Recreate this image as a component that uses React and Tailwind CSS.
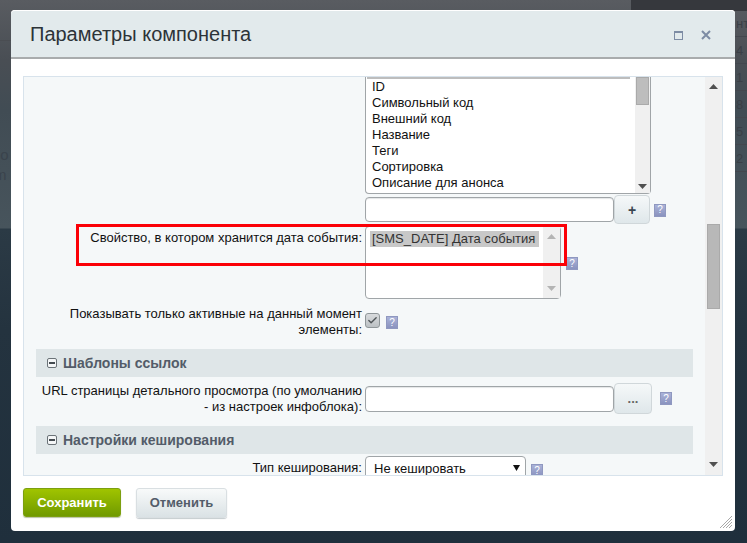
import { Check } from "lucide-react";

const fieldsList = ["ID", "Символьный код", "Внешний код", "Название", "Теги", "Сортировка", "Описание для анонса"];
const backdropCells = ["нт", "4", "1", "8", "5", "2"];

function Help({ className = "" }) {
	return (
		<span className={"flex h-[13px] w-[12px] shrink-0 items-center justify-center border border-[#8f98c0] bg-[linear-gradient(#aab2d8,#8a93bf)] text-[10px] leading-none text-white " + className}>?</span>
	);
}

function Arrow({ up, dim }) {
	const color = dim ? "#b4b4b4" : "#505050";
	return (
		<svg width="9" height="5" viewBox="0 0 9 5" className="block">
			<path d={up ? "M4.5 0L9 5H0Z" : "M0 0H9L4.5 5Z"} fill={color} />
		</svg>
	);
}

function SectionHead({ title, className = "" }) {
	return (
		<div className={"flex h-[28px] w-[657px] items-center bg-[#dfe6e8] pl-[11px] " + className}>
			<span className="relative mr-[6px] h-[10px] w-[10px] rounded-[2px] border border-[#6b7378] bg-[#f4f6f7]">
				<span className="absolute left-[1px] top-[3px] h-[2px] w-[6px] bg-[#444b50]" />
			</span>
			<span className="text-[14px] font-bold leading-none text-[#535c69]">{title}</span>
		</div>
	);
}

function Label({ children }) {
	return <div className="w-[326px] shrink-0 text-right text-[13px] leading-[16px] text-[#111]">{children}</div>;
}

function TextWithButton({ text, buttonClass, inputClass }) {
	return (
		<div className="flex items-center">
			<div className={"w-[249px] rounded-[4px] border border-[#a0a5a8] bg-white shadow-[inset_0_1px_1px_#e4e6e7] " + inputClass} />
			<div className={"flex items-center justify-center rounded-[4px] border border-[#d0d7da] bg-[linear-gradient(#f5f8f9,#dfe7ea)] " + buttonClass}>{text}</div>
		</div>
	);
}

export default function App() {
	return (
		<div className="relative h-[543px] w-[747px] overflow-hidden bg-[#1f2f3c] bg-[linear-gradient(180deg,#595c61_0px,#494e54_60px,#414c54_110px,#47545c_228px,#2b3a45_229px,#24333f_330px,#1f2f3c_543px)] pl-[11px] pt-[10px] font-['Liberation_Sans',Arial,sans-serif]">
			{/* what shows of the page behind the overlay */}
			<div className="absolute right-0 top-0 h-[11px] w-[116px] bg-[#36383d]" />
			<div className="absolute left-0 top-[40px] h-px w-[11px] bg-[#4a4d52]" />
			<div className="absolute left-0 top-[145px] text-[15px] leading-[20px] text-[#3a434c]">
				<div className="-ml-[3px]">lo</div>
				<div className="-ml-[6px]">m</div>
			</div>
			<div className="absolute right-0 top-[10px] flex w-[12px] flex-col text-[13px] text-[#3a3f46]">
				{backdropCells.map((c) => (
					<div key={c} className="flex h-[27px] items-center border-b border-[#43474e] pl-[1px] leading-none">{c}</div>
				))}
			</div>

			<div className="relative flex h-[521px] w-[724px] flex-col rounded-[4px] bg-white">
				<div className="flex h-[49px] shrink-0 items-center justify-between rounded-t-[4px] border-b-2 border-t border-b-[#a9acad] border-t-white bg-[#e2eaec] pl-[19px] pr-[24px]">
					<h1 className="text-[20px] font-normal leading-none text-[#2c3338]">Параметры компонента</h1>
					<div className="mt-[2px] flex items-center gap-[18px]">
						<span className="h-[9px] w-[9px] border border-t-2 border-[#7d8ca4]" />
						<svg width="10" height="10" viewBox="0 0 10 10"><path d="M1 1L9 9M9 1L1 9" stroke="#7d8ca4" strokeWidth="2" /></svg>
					</div>
				</div>

				<div className="mx-[12px] mt-[17px] flex h-[400px] shrink-0 overflow-hidden border border-[#d8e3ec] bg-[#f5f8f9]">
					<div className="h-full w-[681px] shrink-0 pl-[12px]">
						<div className="flex">
							<div className="ml-[329px] flex h-[117px] w-[286px] rounded-b-[4px] border-x border-b border-[#a0a5a8] bg-white">
								<div className="flex-1 pl-[1px] pr-[5px]">
									<div className="flex h-[2px] bg-[#bdbdbd]" />
									<div className="pl-[5px] text-[13px] leading-[16px] text-[#111]">
										{fieldsList.map((f) => <div key={f}>{f}</div>)}
									</div>
								</div>
								<div className="flex w-[15px] flex-col items-center justify-between bg-[#f0f0f0] pb-[4px]">
									<div className="h-[28px] w-[13px] border border-[#aaa] bg-[#bdbdbd]" />
									<Arrow />
								</div>
							</div>
						</div>

						<div className="ml-[329px] mt-[1px] flex items-center">
							<TextWithButton text={<span className="text-[14px] font-bold leading-none text-[#3b4650]">+</span>} inputClass="h-[25px]" buttonClass="h-[29px] w-[36px]" />
							<Help className="ml-[4px] mt-[1px]" />
						</div>

						<div className="mt-[2px] flex gap-[3px]">
							<Label><div className="pt-[4px]">Свойство, в котором хранится дата события:</div></Label>
							<div className="flex h-[73px] w-[196px] rounded-[4px] border border-[#a0a5a8] bg-white">
								<div className="flex-1 pl-[4px] pt-[4px]">
									<div className="h-[16px] w-[169px] bg-[#c8c8c8] pl-[2px] text-[13px] leading-[16px] text-[#333]">[SMS_DATE] Дата события</div>
								</div>
								<div className="flex w-[17px] flex-col items-center justify-between bg-[#f0f0f0] py-[7px]">
									<Arrow up dim />
									<Arrow dim />
								</div>
							</div>
							<Help className="ml-[2px] mt-[31px]" />
						</div>

						<div className="mt-[6px] flex gap-[3px]">
							<Label>
								<div className="pt-[1px]">Показывать только активные на данный момент элементы:</div>
							</Label>
							<div className="mt-[8px] flex h-[15px] w-[15px] items-center justify-center rounded-[3px] border border-[#8f9699] bg-[linear-gradient(#d8dbdd,#bcc1c4)]">
								<Check size={11} strokeWidth={3} className="text-[#4f5558]" />
							</div>
							<Help className="ml-[3px] mt-[11px]" />
						</div>

						<SectionHead title="Шаблоны ссылок" className="mt-[11px]" />

						<div className="mt-[5px] flex items-start gap-[3px]">
							<Label>
								<div className="pt-[1px]">URL страницы детального просмотра (по умолчанию - из настроек инфоблока):</div>
							</Label>
							<div className="mt-[1px] flex items-center">
								<TextWithButton text={<span className="text-[13px] font-bold leading-none text-[#666]">...</span>} inputClass="h-[26px]" buttonClass="h-[31px] w-[38px]" />
								<Help className="ml-[8px]" />
							</div>
						</div>

						<SectionHead title="Настройки кеширования" className="mt-[11px]" />

						<div className="mt-[2px] flex gap-[3px]">
							<Label><div className="pt-[4px]">Тип кеширования:</div></Label>
							<div className="flex h-[30px] w-[161px] justify-between rounded-[4px] border border-[#a0a5a8] bg-white pl-[8px] pr-[5px] pt-[4px] text-[13px] leading-[16px] text-[#111]">
								<span>Не кешировать</span>
								<svg width="7" height="6" viewBox="0 0 7 6" className="mt-[4px]"><path d="M0 0H7L3.500 6Z" fill="#111" /></svg>
							</div>
							<Help className="ml-[2px] mt-[8px]" />
						</div>
					</div>

					<div className="flex h-full w-[17px] shrink-0 flex-col items-center bg-[#f0f0f0] pb-[8px] pt-[7px]">
						<Arrow up />
						<div className="mt-[135px] h-[85px] w-[13px] border border-[#aaa] bg-[#b8b8b8]" />
						<div className="flex-1" />
						<Arrow />
					</div>
				</div>

				<div className="ml-[12px] mt-[12px] flex gap-[15px]">
					<button className="h-[29px] w-[98px] rounded-[3px] border border-[#7c9f10] bg-[linear-gradient(#a0c400,#709a00)] text-[13px] font-bold text-white shadow-[0_1px_1px_#b9c2a5]">Сохранить</button>
					<button className="h-[30px] w-[91px] rounded-[3px] border border-[#d9dfe2] bg-[linear-gradient(#f8fafa,#dae2e5)] text-[13px] font-bold text-[#535c69] shadow-[0_1px_1px_#c4cbce]">Отменить</button>
				</div>

				{/* overlays */}
				<div className="absolute left-[65px] top-[214px] h-[42px] w-[491px] border-[3px] border-[#fb0007]" />
				<svg width="12" height="12" viewBox="0 0 12 12" className="absolute bottom-[3px] right-[3px]">
					<path d="M0 12L12 0M3 12L12 3M6 12L12 6M9 12L12 9" stroke="#a8a8a8" strokeWidth="1" />
				</svg>
			</div>
		</div>
	);
}
